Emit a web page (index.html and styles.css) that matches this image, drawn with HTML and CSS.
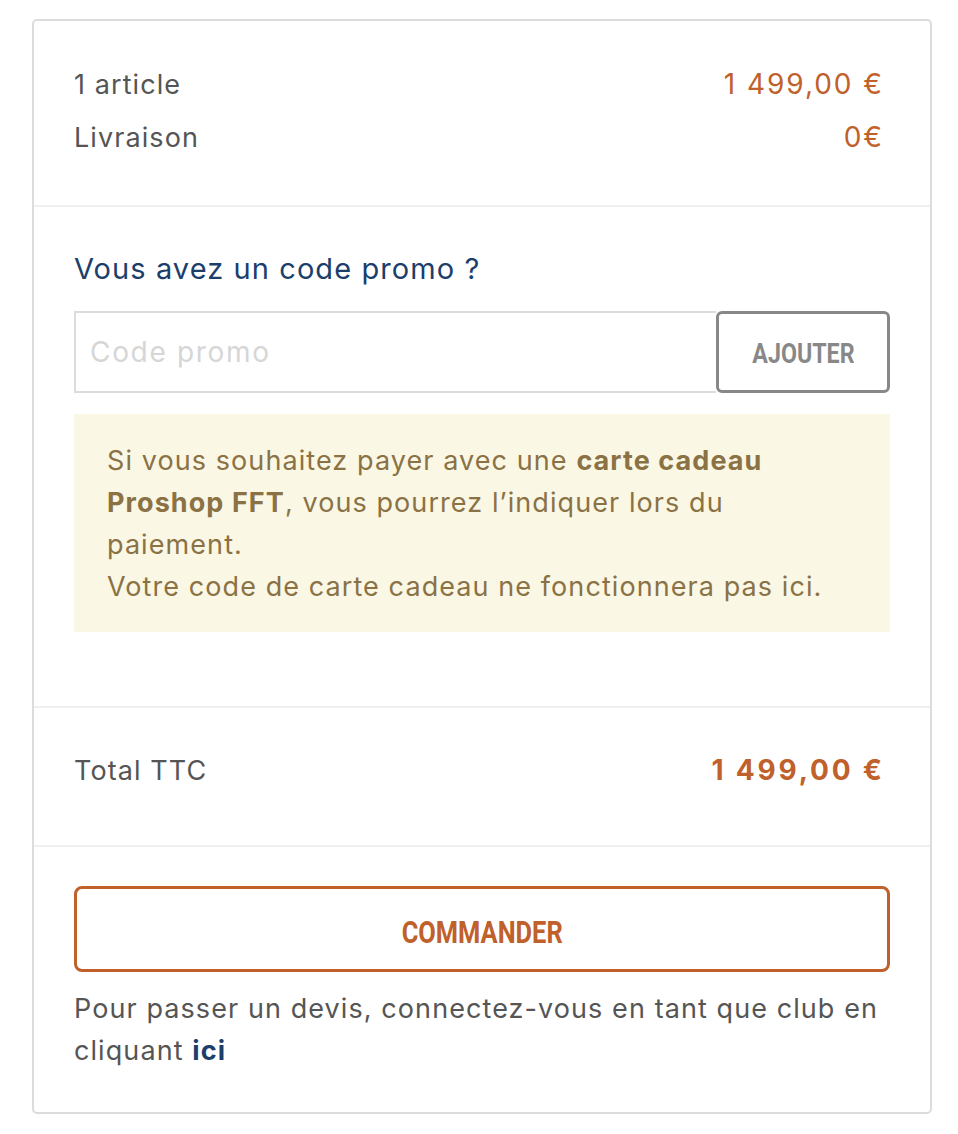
FILE: index.html
```html
<!DOCTYPE html>
<html lang="fr">
<head>
<meta charset="utf-8">
<title>Récapitulatif</title>
<link rel="stylesheet" href="styles.css">
</head>
<body>
<div class="page">
  <div class="card">
    <section class="sec sec-summary">
      <div class="row"><span class="label">1 article</span><span class="price">1 499,00 €</span></div>
      <div class="row"><span class="label">Livraison</span><span class="price">0€</span></div>
    </section>
    <section class="sec sec-promo">
      <h3 class="promo-title">Vous avez un code promo ?</h3>
      <form class="promo-form">
        <input class="promo-input" type="text" placeholder="Code promo">
        <button class="btn-add" type="button"><span class="cond cond-add">AJOUTER</span></button>
      </form>
      <div class="note">Si vous souhaitez payer avec une <b>carte cadeau</b><br><b>Proshop FFT</b>, vous pourrez l’indiquer lors du<br>paiement.<br>Votre code de carte cadeau ne fonctionnera pas ici.</div>
    </section>
    <section class="sec sec-total">
      <div class="row"><span class="label">Total TTC</span><span class="price total">1 499,00 €</span></div>
    </section>
    <section class="sec sec-order">
      <button class="btn-order" type="button"><span class="cond cond-order">COMMANDER</span></button>
      <p class="quote">Pour passer un devis, connectez-vous en tant que club en<br>cliquant <a class="link" href="#">ici</a></p>
    </section>
  </div>
</div>
</body>
</html>
```

FILE: styles.css
```css
* { box-sizing: border-box; }
html, body { margin: 0; padding: 0; background: #fff; }
body {
  font-family: Inter, "Open Sans", "DejaVu Sans", sans-serif;
  color: #555;
  font-size: 27px;
  letter-spacing: 0.04em;
}
.page { padding: 19px 0 0 32px; }
.card {
  width: 900px;
  border: 2px solid #dcdcdc;
  border-radius: 5px;
}
.sec { padding: 0 40px; border-top: 2px solid #efefef; }
.sec:first-child { border-top: 0; }
.sec-summary { padding-top: 37px; padding-bottom: 41px; }
.row {
  display: flex;
  justify-content: space-between;
  align-items: baseline;
  line-height: 52px;
  padding-right: 8px;
}
.label { color: #555; }
.price {
  color: #c0602b;
  font-size: 28px;
  letter-spacing: 0.07em;
  margin-right: -0.07em;
}
.price.total {
  font-weight: 700;
  letter-spacing: 0.1em;
  margin-right: -0.1em;
}
.sec-promo { padding-top: 44px; padding-bottom: 74px; }
.promo-title {
  margin: 0 0 24px;
  font-size: 29px;
  font-weight: 400;
  line-height: 36px;
  color: #1b3e6b;
}
.promo-form { display: flex; margin: 0; }
.promo-input {
  flex: 1;
  height: 82px;
  border: 2px solid #dcdcdc;
  border-right: 0;
  padding: 0 14px;
  font-family: inherit;
  font-size: 28px;
  letter-spacing: 0.06em;
  color: #555;
  outline: none;
  margin: 0;
}
.promo-input::placeholder { color: #d6d6d6; }
.btn-add, .btn-order {
  font-family: Roboto, "Liberation Sans", sans-serif;
  font-weight: 700;
  letter-spacing: 0;
  background: #fff;
  cursor: pointer;
  margin: 0;
  padding: 0;
}
.cond { display: inline-block; }
.btn-add {
  width: 174px;
  height: 82px;
  border: 3px solid #888;
  border-radius: 6px;
  color: #888;
  font-size: 27px;
  padding-top: 4px;
}
.cond-add { transform: scaleX(0.86); }
.note {
  margin-top: 21px;
  background: #fbf7e5;
  color: #8a7245;
  padding: 26px 33px 24px;
  font-size: 27px;
  line-height: 42px;
}
.note b { font-weight: 700; }
.sec-total { padding-top: 36px; padding-bottom: 48px; }
.sec-order { padding-top: 39px; padding-bottom: 40px; }
.btn-order {
  display: block;
  width: 100%;
  height: 86px;
  border: 3px solid #c0602b;
  border-radius: 8px;
  color: #c0602b;
  font-size: 31px;
  padding-top: 6px;
}
.cond-order { transform: scaleX(0.82); }
.quote {
  margin: 16px 0 0;
  line-height: 42px;
  color: #555;
}
.link { color: #1b3e6b; font-weight: 700; text-decoration: none; }
```
